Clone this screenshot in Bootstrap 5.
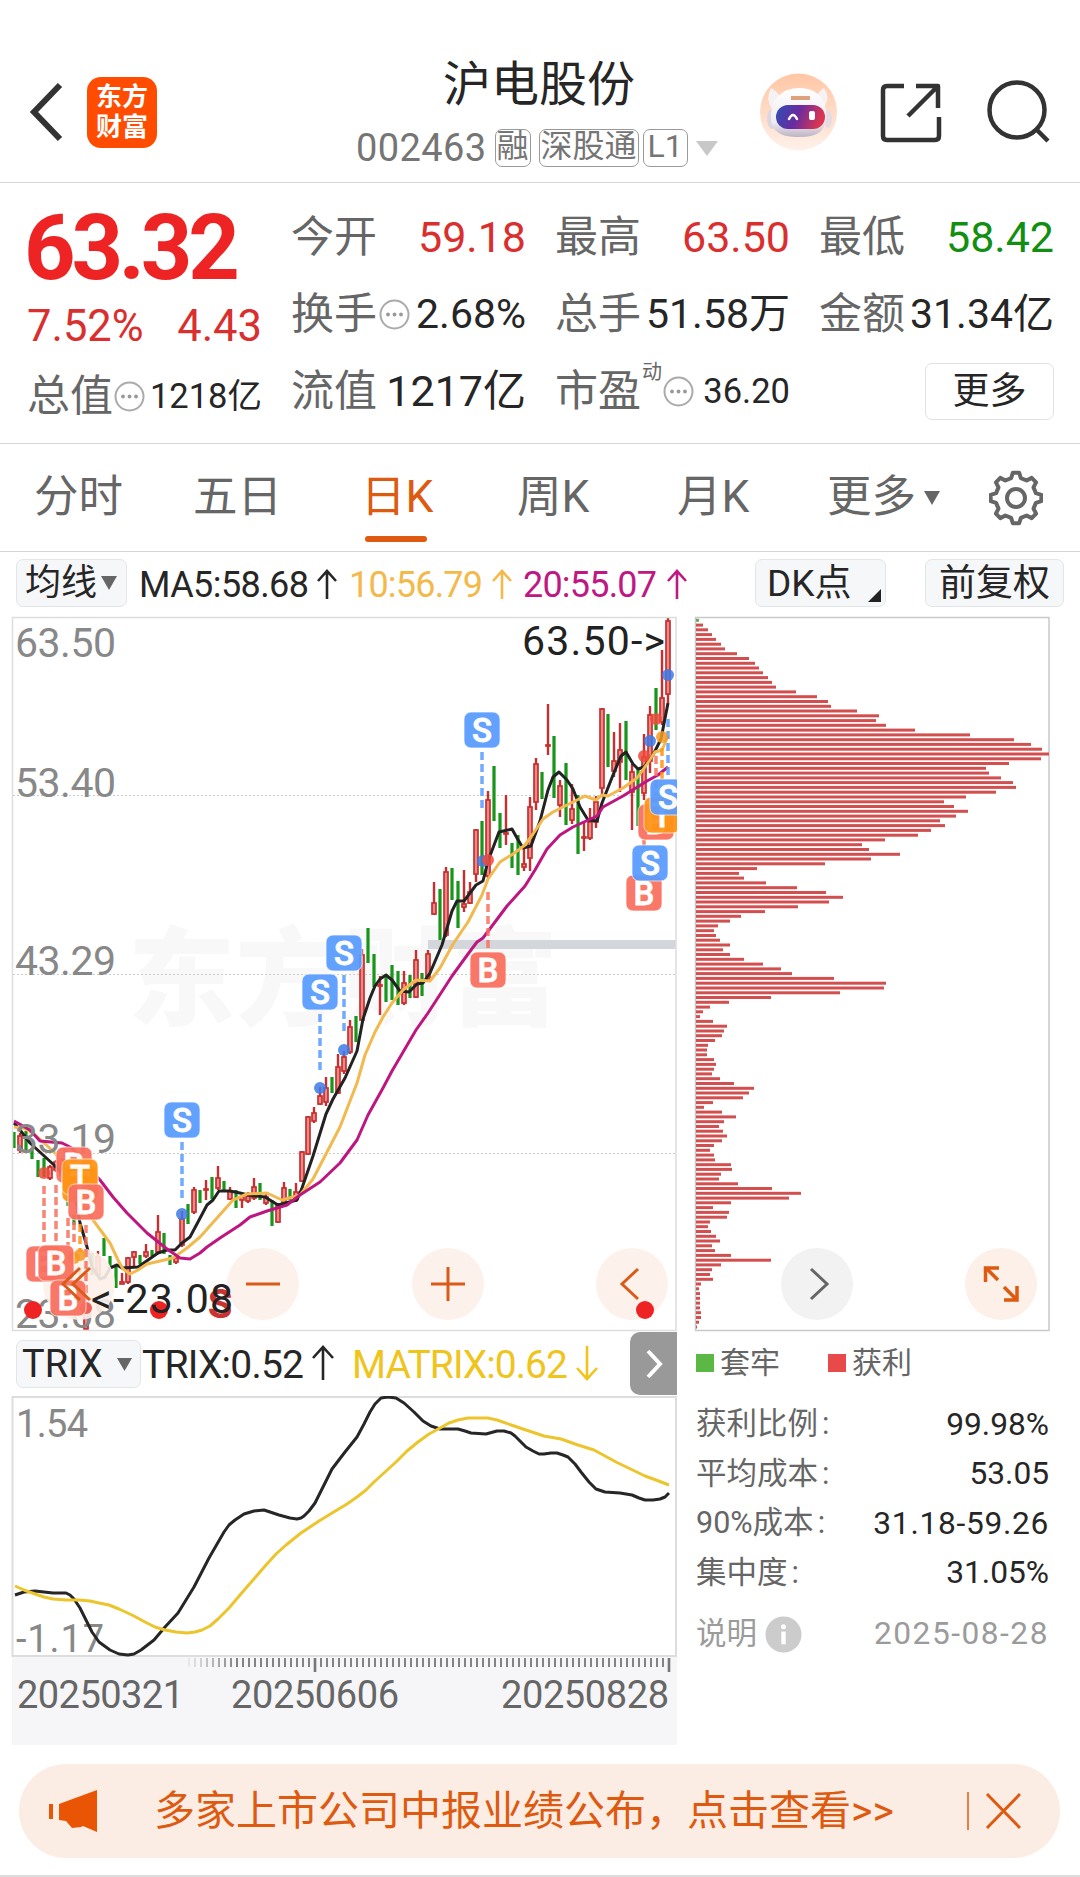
<!DOCTYPE html>
<html lang="zh-CN">
<head>
    <meta charset="UTF-8">
    <meta name="viewport" content="width=device-width, initial-scale=1.0">
    <title>沪电股份 002463</title>
    <link rel="stylesheet" href="https://cdn.jsdelivr.net/npm/bootstrap@5.3.0/dist/css/bootstrap.min.css">
    <style>
        body { width: 1080px; height: 1877px; overflow: hidden; background: #fff; color: #262626; font-family: Roboto, "Noto Sans CJK SC", sans-serif; line-height: 1; }
        svg { display: block; flex: none; }
        svg text { font-family: Roboto, "Noto Sans CJK SC", sans-serif; }
        .line-b { border-bottom: 1px solid #d6d6d6; }

        /* En-tête */
        .topbar { height: 183px; padding: 50px 0 0 28px; }
        .back { margin-top: 32px; }
        .logo { width: 70px; height: 71px; margin: 27px 0 0 23px; border-radius: 14px; background: #ff4c00; color: #fff; font-size: 26px; line-height: 30px; font-weight: 700; padding-top: 5px; }
        .title-box { margin-left: 199px; width: 399px; padding-top: 7px; }
        .stock-name { font-size: 48px; line-height: 56px; padding-left: 87px; }
        .stock-code { font-size: 38px; color: #757575; height: 40px; margin-top: 15px; letter-spacing: .4px; }
        .flag { border: 1.5px solid #9a9a9a; border-radius: 7px; font-size: 32px; height: 38px; line-height: 33px; padding: 0 1px; color: #757575; letter-spacing: 0; }
        .top-icons { margin-top: 17px; }

        /* Cotation */
        .quote { height: 261px; padding: 0 27px 0 27px; column-gap: 29px; }
        .quote .cell { width: 235px; height: 77px; font-size: 43px; white-space: nowrap; }
        .quote .first-col { width: 235px; padding-top: 24px; }
        .lbl { color: #666; }
        .up { color: #d92f2f; }
        .down { color: #128f12; }
        .price { font-size: 90px; font-weight: 700; color: #ee2424; letter-spacing: -4.2px; height: 84px; line-height: 84px; margin-left: -3px; }
        .pct { font-size: 43.5px; height: 67px; line-height: 72px; }
        .v40 { font-size: 41px; }
        .v34 { font-size: 34.5px; }
        .dyn { font-size: 20px; align-self: flex-start; margin-top: 9px; }
        .more { width: 129px; height: 57px; font-size: 37px; border: 1.5px solid #e2e2e2; border-radius: 7px; }

        /* Onglets */
        .tabs { display: grid; grid-template-columns: 159px 168px 156px 160px 150px 162px 54px; height: 108px; padding-left: 34px; font-size: 44.500px; color: #666; align-items: center; }
        .tabs .on { color: #dd5a10; position: relative; }
        .tabs .on::after { content: ""; position: absolute; left: 4px; top: 61px; width: 62px; height: 6px; border-radius: 3px; background: #dd5a10; }

        .ma-row { height: 64px; padding: 7px 16px 0 16px; font-size: 35px; }
        .chip { background: #f6f7f9; border: 1.5px solid #e3e5e8; border-radius: 7px; height: 48px; white-space: nowrap; }
        .chip-ma { width: 111px; font-size: 36px; }
        .chip-dk { width: 131px; padding-left: 11px; font-size: 37px; }
        .chip-fq { width: 139px; margin-left: 39px; font-size: 37px; }
        .chip-trix { width: 125px; padding: 0 4px 0 5px; font-size: 38px; }

        .left-col { width: 667px; margin-left: 11px; }
        .trix-row { height: 64px; font-size: 38px; padding-left: 5px; white-space: nowrap; }
        .next-tab { width: 47px; height: 63px; background: #999; border-radius: 10px 0 0 10px; margin: 0 1px 0 auto; }
        .right-col { width: 357px; margin-left: 16px; }
        .legend-row { height: 62px; font-size: 30px; padding-left: 2px; }
        .stats { padding: 6px 2px 0 2px; }
        .stat-row { height: 49.4px; font-size: 30.5px; }
        .stat-row b { font-weight: 400; font-size: 31.7px; }
        .stat-row i { font-style: normal; margin-left: 4px; }
        .note-row { color: #9b9b9b; margin-top: 12px; }
        .stat-row .wide { letter-spacing: .7px; }
        .stat-row .wider { letter-spacing: 1.5px; }
        .sq { width: 18px; height: 18px; margin-right: 6px; }
        .sq-down { background: #5cb844; }
        .sq-up { background: #e84a4a; margin-left: 48px; }

        .banner { width: 1041px; height: 94px; margin: 18px 0 0 19px; border-radius: 47px; background: #fcede4; color: #dd5a10; font-size: 41px; padding: 0 39px 0 30px; }
        .banner-text { margin-left: 57px; white-space: nowrap; }
        .bottom-line { height: 2px; background: #dcdcdc; margin-top: 17px; }
    </style>
</head>
<body>
    <!-- En-tête -->
    <header class="topbar line-b d-flex">
        <svg width="36" height="60" viewBox="0 0 36 60" class="back"><path d="M32 3 6 30 32 57" fill="none" stroke="#333" stroke-width="6"/></svg>
        <div class="logo text-center"><div>东方</div><div>财富</div></div>
        <div class="title-box">
            <div class="stock-name">沪电股份</div>
            <div class="stock-code d-flex align-items-center">
                <span class="me-2">002463</span>
                <span class="flag me-2">融</span><span class="flag me-1">深股通</span><span class="flag px-1">L1</span>
                <svg width="22" height="16" class="ms-2" viewBox="0 0 22 16"><path d="M0 1h22L11 16z" fill="#c8c8c8"/></svg>
            </div>
        </div>
        <!-- Robot, partage, recherche -->
        <svg width="300" height="90" viewBox="755 67 300 90" class="top-icons">
            <defs>
                <linearGradient id="halo" x1="0" y1="0" x2="0" y2="1"><stop offset="0" stop-color="#ffc6a4"/><stop offset="1" stop-color="#fff1ea"/></linearGradient>
                <linearGradient id="visor" x1="0" y1="0" x2="1" y2=".2"><stop offset="0" stop-color="#2d50b4"/><stop offset=".5" stop-color="#6a2aa0"/><stop offset="1" stop-color="#dc3550"/></linearGradient>
                <linearGradient id="helmet" x1="0" y1="0" x2="0" y2="1"><stop offset="0" stop-color="#fff"/><stop offset=".7" stop-color="#efebf0"/><stop offset="1" stop-color="#bdb4c4"/></linearGradient>
            </defs>
            <circle cx="798.500" cy="112" r="38.500" fill="url(#halo)"/>
            <path d="M771 88q6 3 9 9l-8 12q-7-10-1-21zM824 88q-5 3-7 8l7 11q7-9 0-19z" fill="#f6f2f4"/>
            <ellipse cx="772" cy="119" rx="5" ry="10" fill="#ddd6de"/>
            <ellipse cx="828" cy="119" rx="4" ry="9" fill="#e4dce2"/>
            <path d="M771 117c0-18 11-29 28-29s27 10 27 27-9 22-27 22-28-5-28-20z" fill="url(#helmet)"/>
            <rect x="776" y="105" width="49" height="24" rx="12" fill="url(#visor)"/>
            <path d="M789 119q4-8 8 0" fill="none" stroke="#fff" stroke-width="2.500" stroke-linecap="round"/>
            <rect x="809" y="111" width="6" height="9" rx="2" fill="#fff"/>
            <path d="M791 98h19" stroke="#dca27c" stroke-width="4"/>
            <g fill="none" stroke="#333" stroke-width="4.500">
                <path d="M904 86h-17q-4 0-4 4v46q0 4 4 4h48q4 0 4-4v-19M916 86h22v22M937 87 908 116" stroke-linejoin="round"/>
                <circle cx="1017" cy="110" r="27.500"/>
                <path d="M1036 129l12 12"/>
            </g>
        </svg>
    </header>

    <!-- Cotation -->
    <section class="quote line-b d-flex">
        <div class="first-col">
            <div class="price">63.32</div>
            <div class="pct up d-flex justify-content-between"><span>7.52%</span><span>4.43</span></div>
            <div class="cell d-flex justify-content-between align-items-center pb-3"><span class="lbl mt-3">总值</span><i class="dots mt-3"></i><span class="v34 mt-3 ms-1">1218亿</span></div>
        </div>
        <div class="pt-3">
            <div class="cell d-flex justify-content-between align-items-center"><span class="lbl">今开</span><span class="up">59.18</span></div>
            <div class="cell d-flex justify-content-between align-items-center"><span class="lbl">换手</span><i class="dots"></i><span class="v40 ms-1">2.68%</span></div>
            <div class="cell d-flex justify-content-between align-items-center"><span class="lbl">流值</span><span>1217亿</span></div>
        </div>
        <div class="pt-3">
            <div class="cell d-flex justify-content-between align-items-center"><span class="lbl">最高</span><span class="up">63.50</span></div>
            <div class="cell d-flex justify-content-between align-items-center"><span class="lbl">总手</span><span class="v40">51.58万</span></div>
            <div class="cell d-flex justify-content-between align-items-center"><span class="lbl">市盈</span><span class="dyn lbl">动</span><i class="dots"></i><span class="v34 ms-2">36.20</span></div>
        </div>
        <div class="pt-3">
            <div class="cell d-flex justify-content-between align-items-center"><span class="lbl">最低</span><span class="down">58.42</span></div>
            <div class="cell d-flex justify-content-between align-items-center"><span class="lbl">金额</span><span class="v40">31.34亿</span></div>
            <div class="cell d-flex justify-content-end align-items-center"><div class="more d-flex justify-content-center align-items-center">更多</div></div>
        </div>
    </section>

    <!-- Onglets de période -->
    <nav class="tabs line-b">
        <span>分时</span><span>五日</span><span class="on">日K</span><span>周K</span><span>月K</span>
        <span class="d-flex align-items-center">更多<svg width="16" height="14" class="ms-2" viewBox="0 0 16 14"><path d="M0 0h16L8 14z" fill="#666"/></svg></span>
        <svg width="54" height="56" viewBox="-27 -28 54 56" fill="none" stroke="#666" stroke-width="4"><path id="gear" stroke-linejoin="round"/><circle r="9"/></svg>
    </nav>

    <div class="ma-row d-flex">
        <div class="chip chip-ma d-flex align-items-center ps-2">均线<svg width="16" height="14" class="ms-1" viewBox="0 0 16 14"><path d="M0 0h16L8 14z" fill="#666"/></svg></div>
        <svg width="560" height="48" viewBox="127 559 560 48" overflow="visible">
            <g font-size="36">
                <text x="139" y="597" fill="#262626" textLength="170">MA5:58.68</text><text x="349" y="597" fill="#f3b94a" textLength="134">10:56.79</text><text x="523" y="597" fill="#c01882" textLength="134">20:55.07</text>
            </g>
            <g fill="none" stroke-width="2.600"><path d="M327 599v-28m-9 10 9-10 9 10" stroke="#262626"/><path d="M502 599v-28m-9 10 9-10 9 10" stroke="#f3b94a"/><path d="M677 599v-28m-9 10 9-10 9 10" stroke="#c01882"/></g>
        </svg>
        <div class="chip chip-dk d-flex align-items-center ms-auto">DK点<svg width="13" height="13" class="ms-auto mt-auto mb-1 me-1" viewBox="0 0 13 13"><path d="M13 0v13H0z" fill="#222"/></svg></div>
        <div class="chip chip-fq d-flex align-items-center justify-content-center">前复权</div>
    </div>

    <main class="d-flex">
        <div class="left-col">
            <svg id="kline" width="667" height="716" viewBox="11 616 667 716"></svg>
            <div class="trix-row d-flex">
                <div class="chip chip-trix d-flex align-items-center align-self-center">TRIX<svg width="15" height="13" class="ms-auto me-1" viewBox="0 0 15 13"><path d="M0 0h15L7.500 13z" fill="#666"/></svg></div>
                <svg width="480" height="64" viewBox="141 1332 480 64">
                    <g font-size="39"><text x="142" y="1378" fill="#262626" textLength="162">TRIX:0.52</text><text x="352" y="1378" fill="#efc41d" textLength="216">MATRIX:0.62</text></g>
                    <g fill="none" stroke-width="2.600"><path d="M323 1380v-33m-10 11 10-11 10 11" stroke="#262626"/><path d="M587 1346v33m-10-11 10 11 10-11" stroke="#efc41d"/></g>
                </svg>
                <div class="next-tab d-flex align-items-center justify-content-center"><svg width="18" height="30" viewBox="0 0 18 30"><path d="M3 2l12 13L3 28" fill="none" stroke="#fff" stroke-width="4"/></svg></div>
            </div>
            <svg id="trix" width="667" height="350" viewBox="11 1396 667 350"></svg>
        </div>

        <div class="right-col">
            <svg id="chips" width="357" height="716" viewBox="694 616 357 716"></svg>
            <div class="legend-row d-flex align-items-center lbl">
                <span class="sq sq-down"></span>套牢
                <span class="sq sq-up"></span>获利
            </div>
            <div class="stats">
                <div class="stat-row d-flex justify-content-between align-items-center"><span class="lbl">获利比例<i>:</i></span><b>99.98%</b></div>
                <div class="stat-row d-flex justify-content-between align-items-center"><span class="lbl">平均成本<i>:</i></span><b>53.05</b></div>
                <div class="stat-row d-flex justify-content-between align-items-center"><span class="lbl">90%成本<i>:</i></span><b class="wide">31.18-59.26</b></div>
                <div class="stat-row d-flex justify-content-between align-items-center"><span class="lbl">集中度<i>:</i></span><b>31.05%</b></div>
                <div class="stat-row note-row d-flex align-items-center">
                    <span>说明</span>
                    <svg width="37" height="37" viewBox="0 0 38 38" class="ms-2"><circle cx="19" cy="19" r="18.500" fill="#ccc"/><circle cx="19" cy="11" r="2.600" fill="#fff"/><path d="M19 16v13" stroke="#fff" stroke-width="4.500"/></svg>
                    <b class="ms-auto wider">2025-08-28</b>
                </div>
            </div>
        </div>
    </main>

    <!-- Bandeau -->
    <div class="banner d-flex align-items-center">
        <svg width="48" height="42" viewBox="0 0 48 42" fill="#e95504"><path d="M0 14h4v15H0zM10 14 48 0v42L34 36l-2 1-9 1-6-7-7-1z"/></svg>
        <span class="banner-text">多家上市公司中报业绩公布，点击查看&gt;&gt;</span>
        <svg width="54" height="40" viewBox="967 1790 54 40" class="ms-auto" fill="none" stroke="#dd5a10"><path d="M968 1791v38" stroke-width="1.500"/><path d="M987 1793l33 34M1020 1793l-33 34" stroke-width="3"/></svg>
    </div>
    <div class="bottom-line"></div>

    <script src="https://cdn.jsdelivr.net/npm/bootstrap@5.3.0/dist/js/bootstrap.bundle.min.js"></script>
    <script>
        // Petites icônes "..." à côté des libellés
        document.querySelectorAll('.dots').forEach(el => {
            el.innerHTML = '<svg width="31" height="31" viewBox="0 0 31 31"><circle cx="15.500" cy="15.500" r="14" fill="none" stroke="#aaa" stroke-width="2"/><g fill="#999"><circle cx="9" cy="15.500" r="1.900"/><circle cx="15.500" cy="15.500" r="1.900"/><circle cx="22" cy="15.500" r="1.900"/></g></svg>';
        });

        // Engrenage
        let gear = '';
        for (let k = 0; k < 8; k++) {
            [[-0.24, 20.5], [-0.12, 25.5], [0.12, 25.5], [0.24, 20.5]].forEach(([da, r]) => {
                const a = k * Math.PI / 4 - Math.PI / 2 + da;
                gear += (gear ? 'L' : 'M') + (r * Math.cos(a)).toFixed(1) + ' ' + (r * Math.sin(a)).toFixed(1);
            });
        }
        document.getElementById('gear').setAttribute('d', gear + 'Z');

        // Bougies : [couleur, haut, bas, haut du corps, bas du corps]
        const candles = [
            ['g',1132,1148],['r',1133,1153,1136,1150],['g',1131,1150],['g',1148,1159],['g',1160,1177],['g',1158,1177],['r',1165,1180],['r',1160,1172],['r',1158,1177],['g',1193,1206],
            ['g',1215,1225],['g',1270,1290],['r',1307,1331],['g',1253,1275],['r',1251,1277,1257,1275],['g',1238,1256],['g',1256,1266],['g',1267,1288],['r',1273,1284,1282,1284],['r',1257,1284,1258,1282],
            ['r',1251,1266,1252,1257],['g',1255,1264],['r',1244,1258,1252,1256],['g',1250,1256],['r',1215,1254,1232,1252],['g',1233,1254],['g',1255,1265],['r',1256,1264],['r',1211,1247,1219,1245],['g',1204,1224],
            ['r',1187,1214,1190,1212],['g',1190,1203],['r',1180,1200,1189,1190],['g',1177,1199],['r',1166,1190,1178,1188],['g',1181,1192],['r',1187,1200,1191,1199],['g',1190,1208],['r',1195,1208,1197,1200],['r',1192,1203,1196,1201],
            ['r',1178,1200,1187,1198],['g',1183,1200],['r',1194,1205,1197,1203],['g',1200,1226],['r',1203,1223,1205,1222],['r',1182,1207,1188,1204],['g',1189,1200],['r',1183,1202,1192,1199],['r',1151,1182,1152,1181],['r',1116,1155,1117,1154],
            ['r',1107,1123,1113,1121],['r',1087,1105,1096,1104],['r',1077,1106,1088,1102],['g',1077,1093],['r',1054,1094,1067,1093],['r',1051,1074,1057,1071],['r',1020,1054,1027,1052],['g',1016,1042],['r',949,1021,955,1020],['g',928,963],
            ['g',954,987],['r',976,1015,985,986],['g',977,1002],['g',965,1000],['g',971,1005],['r',971,1005,983,1003],['g',975,998],['r',950,998,960,997],['g',973,996],['r',950,981,954,979],
            ['r',882,915,903,914],['g',889,940],['r',867,937,872,935],['g',868,900],['g',881,928],['r',870,912,904,907],['r',882,904,892,903],['r',829,882,830,874],['g',821,875],['r',791,878,800,876],
            ['g',766,821],['g',813,848],['r',795,845,833,834],['g',843,868],['g',835,875],['r',846,871,864,867],['r',797,871,807,858],['r',758,810,764,802],['g',772,799],['r',704,755,745,746],
            ['g',736,798],['r',780,817,786,805],['g',763,825],['r',784,824,809,820],['g',795,854],['r',821,851,837,838],['r',808,840,822,838],['r',796,828,802,822],['r',708,797,709,788],['g',714,767],
            ['r',732,777,761,771],['r',723,792,750,762],['g',721,780],['r',764,830,772,792],['g',768,826],['r',734,800,757,793],['r',706,773,715,761],['g',688,730],['r',650,725,698,722],['r',617,703,621,694]
        ];
        const ma5 = '14,1123 20,1130 30,1143 54,1165 68,1180 76,1200 80,1223 86,1243 92,1267 100,1279 105,1277 110,1268 117,1265 122,1268 138,1267 158,1253 167,1250 175,1250 182,1243 190,1237 198,1222 207,1205 213,1200 219,1191 230,1191 240,1193 248,1195 265,1197 278,1205 297,1200 302,1188 313,1156 326,1114 333,1099 345,1078 357,1051 363,1019 370,998 375,986 380,979 386,975 392,980 400,991 409,992 417,984 423,983 430,973 442,945 452,911 457,901 464,901 476,885 483,881 488,861 499,832 512,829 517,838 523,848 531,846 540,821 548,790 553,777 559,772 567,780 573,789 580,807 588,820 597,821 602,803 613,775 621,756 626,752 633,764 638,769 644,767 653,755 661,739 668,703';
        const ma10 = '14,1127 23,1128 33,1133 43,1142 55,1153 67,1170 80,1200 93,1220 110,1243 118,1260 123,1269 130,1274 138,1270 147,1264 160,1261 173,1258 187,1248 200,1237 217,1218 233,1200 247,1194 267,1193 282,1200 300,1195 313,1179 327,1152 340,1127 350,1101 357,1083 365,1055 375,1032 383,1017 392,1003 403,990 416,980 430,981 440,968 453,944 468,922 482,895 488,879 500,862 513,854 525,845 533,834 543,819 553,812 567,805 585,796 596,800 602,795 608,796 623,788 637,778 647,764 655,752 662,750 668,736';
        const ma20 = '14,1121 30,1130 40,1141 62,1143 72,1148 83,1162 100,1180 113,1197 127,1213 147,1233 167,1249 180,1258 190,1259 200,1253 207,1247 220,1238 240,1225 250,1217 267,1211 287,1205 300,1195 320,1182 340,1163 357,1140 368,1115 383,1088 392,1071 416,1030 428,1013 452,976 468,954 477,942 483,938 507,906 525,886 535,870 547,849 560,835 573,827 597,816 603,807 623,796 647,781 658,775 668,767';

        const BLUE = '#5a9cff', RED = '#f9705e', ORANGE = '#ff9417';
        const poly = (pts, color, w) => `<polyline points="${pts}" fill="none" stroke="${color}" stroke-width="${w}" stroke-linejoin="round"/>`;
        const dash = (x, y1, y2, c) => `<path d="M${x} ${y1}V${y2}" stroke="${c}" stroke-width="3.500" stroke-dasharray="8 4" opacity=".85"/>`;
        const dot = (x, y, c) => `<circle cx="${x}" cy="${y}" r="6" fill="${c}" opacity=".85"/>`;
        const tag = (x, y, t, c) => `<g opacity=".94"><rect x="${x - 18}" y="${y - 18}" width="36" height="36" rx="7" fill="${c}" stroke="#fff" stroke-opacity=".7"/><text x="${x}" y="${y + 11.5}" text-anchor="middle" font-size="33" font-weight="500" fill="#fff" stroke="#fff" stroke-width=".8">${t}</text></g>`;
        const round = (x, c) => `<circle cx="${x}" cy="1284" r="36" fill="${c}" opacity=".9"/>`;

        let k = '<g clip-path="url(#kclip)"><clipPath id="kclip"><rect x="11" y="616" width="666" height="716"/></clipPath>';
        k += '<text x="128" y="1017" font-size="107" font-weight="900" fill="#f8f8f8" textLength="430">东方财富</text>';
        [795.5, 974.5, 1153.5].forEach(y => k += `<path d="M13 ${y}H676" stroke="#ccc" stroke-dasharray="2 2"/>`);
        k += '<path d="M428 944.500H676" stroke="#d3d6da" stroke-width="9"/>';
        candles.forEach(([c, hi, lo, top, bot], i) => {
            const x = 14 + i * 6;
            if (c === 'g') {
                k += `<rect x="${x - 1.6}" y="${hi}" width="3.200" height="${lo - hi}" fill="#16961a"/>`;
            } else {
                top = top || hi + 2; bot = bot || lo - 2;
                k += `<path d="M${x} ${hi}V${lo}" stroke="#c62f2f" stroke-width="2.400"/><rect x="${x - 2}" y="${top}" width="4" height="${Math.max(1, bot - top)}" fill="#e98a86" stroke="#c62f2f" stroke-width="1.700"/>`;
            }
        });
        k += poly(ma5, '#222', 3) + poly(ma10, '#f1b94e', 3) + poly(ma20, '#bd1680', 3);
        k += '<rect x="12.500" y="617.500" width="663.500" height="713" fill="none" stroke="#ddd" stroke-width="1.500"/>';
        [[657, '63.50'], [797, '53.40'], [975, '43.29'], [1153, '33.19'], [1328, '23.08']].forEach(([y, t]) => k += `<text x="15" y="${y}" font-size="41" fill="#888" textLength="101">${t}</text>`);
        k += round(79, '#fdf0e9') + round(263, '#fdf0e9') + round(448, '#fdf0e9') + round(632, '#fdf0e9');

        // Signaux d'achat / vente
        k += dash(182, 1142, 1200, BLUE) + dash(320, 1014, 1072, BLUE) + dash(344, 975, 1032, BLUE) + dash(482, 752, 810, BLUE) + dash(488, 892, 950, RED);
        k += dash(44, 1186, 1244, RED) + dash(56, 1185, 1243, RED) + dash(68, 1218, 1246, RED) + dash(74, 1222, 1244, RED) + dash(80, 1224, 1252, ORANGE) + dash(86, 1225, 1300, RED);
        k += dash(644, 840, 876, RED) + dash(656, 756, 800, RED) + dash(662, 748, 796, ORANGE) + dash(668, 719, 777, BLUE);
        [[182, 1214], [320, 1088], [344, 1050], [483, 861], [650, 741], [668, 675]].forEach(([x, y]) => k += dot(x, y, '#3d7ae8'));
        [[488, 860], [644, 756], [656, 719], [44, 1173], [86, 1308]].forEach(([x, y]) => k += dot(x, y, '#ee4a3c'));
        k += dot(662, 737, '#f59a23') + dot(80, 1255, '#f59a23') + dot(74, 1258, '#f59a23');
        k += tag(182, 1120, 'S', BLUE) + tag(320, 992, 'S', BLUE) + tag(344, 953, 'S', BLUE) + tag(482, 730, 'S', BLUE) + tag(488, 970, 'B', RED);
        k += tag(74, 1165, 'B', RED) + tag(80, 1184, 'T', ORANGE) + tag(80, 1177, 'T', ORANGE) + tag(86, 1202, 'B', RED) + tag(44, 1264, 'B', RED) + tag(56, 1263, 'B', RED) + tag(68, 1298, 'B', RED);
        k += tag(644, 893, 'B', RED) + tag(656, 822, 'B', RED) + tag(662, 815, 'T', ORANGE) + tag(668, 797, 'S', BLUE) + tag(650, 863, 'S', BLUE);

        k += '<g fill="none" stroke="#d95b1a" stroke-width="3"><path d="M246 1284h34M431 1284h34M448 1267v34M638 1269l-16 15 16 15"/><path d="M80 1268l-17 16 17 16M90 1268l-17 16 17 16"/></g>';
        k += '<g fill="#ee2323"><circle cx="33" cy="1310" r="9"/><circle cx="159" cy="1310" r="9"/><circle cx="645" cy="1310" r="9"/></g>';
        k += '<text x="220" y="1318" text-anchor="middle" font-size="40" font-weight="700" fill="#c93333">S</text>';
        k += '<text x="91" y="1313" font-size="41" fill="#222" textLength="142">&lt;-23.08</text><text x="522" y="655" font-size="41" fill="#222" textLength="143">63.50-&gt;</text></g>';
        document.getElementById('kline').innerHTML = k;

        // Indicateur TRIX
        const trix = '15,1595 24,1592 35,1591 53,1593 66,1593 70,1595 74,1599 80,1608 86,1620 92,1632 99,1642 110,1650 119,1654 128,1655 134,1654 141,1650 154,1640 165,1627 178,1613 194,1587 209,1558 224,1532 229,1525 235,1520 244,1514 254,1511 264,1510 270,1512 279,1515 290,1518 297,1519 301,1518 304,1516 309,1511 315,1503 332,1469 345,1452 357,1437 364,1424 370,1412 375,1404 381,1398 388,1397 396,1398 404,1403 414,1412 423,1421 431,1426 440,1429 458,1429 465,1431 471,1433 486,1434 497,1431 504,1431 511,1433 515,1436 519,1440 526,1447 533,1451 539,1454 544,1454 551,1453 557,1453 563,1455 568,1457 575,1464 581,1472 589,1482 596,1489 605,1492 620,1493 632,1495 639,1498 645,1500 653,1500 660,1499 665,1497 669,1493';
        const matrix = '15,1586 24,1590 35,1594 44,1597 53,1599 66,1600 79,1600 90,1601 99,1603 109,1605 119,1609 132,1615 145,1622 155,1627 165,1630 176,1632 187,1633 195,1632 202,1630 210,1626 218,1619 229,1608 240,1595 253,1580 266,1565 276,1554 286,1545 301,1533 319,1521 337,1510 347,1504 357,1497 366,1490 374,1482 396,1462 407,1451 418,1442 429,1434 440,1428 449,1423 458,1420 468,1418 478,1418 488,1418 497,1420 520,1428 544,1436 561,1439 578,1445 594,1450 616,1462 645,1476 656,1480 669,1485';
        let t = '<rect x="12" y="1657" width="665" height="88" fill="#f6f6f9"/><g fill="#888" font-size="38"><text x="16" y="1437" textLength="72">1.54</text><text x="16" y="1652" textLength="88">-1.17</text></g>';
        t += '<rect x="12.500" y="1397" width="663.500" height="259" fill="none" stroke="#ddd" stroke-width="2"/>';
        t += poly(trix, '#262626', 3) + poly(matrix, '#ecc52c', 3);
        for (let i = 29; i < 110; i++) {
            const big = i === 50 || i === 109;
            t += `<path d="M${15 + i * 6} 1658v${big ? 14 : 9}" stroke="#777" stroke-width="${big ? 2.6 : 1.8}" opacity="${Math.min(1, (i - 28) / 9)}"/>`;
        }
        t += '<g fill="#666" font-size="38"><text x="17" y="1708" textLength="167">20250321</text><text x="231" y="1708" textLength="168">20250606</text><text x="501" y="1708" textLength="168">20250828</text></g>';
        document.getElementById('trix').innerHTML = t;

        // Répartition des coûts
        const widths = [3,7,12,16,20,25,29,41,53,59,63,67,72,76,80,100,121,132,135,161,183,180,190,219,274,318,335,346,353,345,313,290,293,305,317,320,300,270,248,258,272,260,244,249,235,222,189,166,173,204,175,129,61,43,48,70,101,130,147,133,102,69,45,34,22,18,20,24,34,27,34,48,67,85,
            96,138,190,188,144,75,33,14,7,4,17,31,28,26,19,12,11,11,18,20,18,16,24,38,58,53,47,17,8,26,40,28,23,27,31,26,18,14,18,19,35,36,25,23,42,76,105,93,35,17,33,31,14,12,15,20,24,16,19,35,75,25,16,14,17,5,3,4,4,4,4,5,5,3,1];
        let c = '<rect x="695.500" y="617.500" width="353.500" height="713" fill="none" stroke="#c9c9c9" stroke-width="1.500"/>';
        widths.forEach((w, i) => {
            c += `<rect x="696" y="${(618.8 + i * 4.775).toFixed(1)}" width="${w}" height="3" fill="${i ? '#d34f4f' : '#6aa858'}"/>`;
        });
        c += '<circle cx="817" cy="1284" r="36" fill="#f2f2f2"/><path d="M811 1269l16 15-16 15" fill="none" stroke="#666" stroke-width="3"/>';
        c += '<circle cx="1001" cy="1284" r="36" fill="#fdf0e9"/><path d="M985.500 1282v-14H999M986 1268l12 12M1004 1300h13v-14M1017 1300l-13-13" fill="none" stroke="#dd5a10" stroke-width="3.500"/>';
        document.getElementById('chips').innerHTML = c;
    </script>
</body>
</html>
